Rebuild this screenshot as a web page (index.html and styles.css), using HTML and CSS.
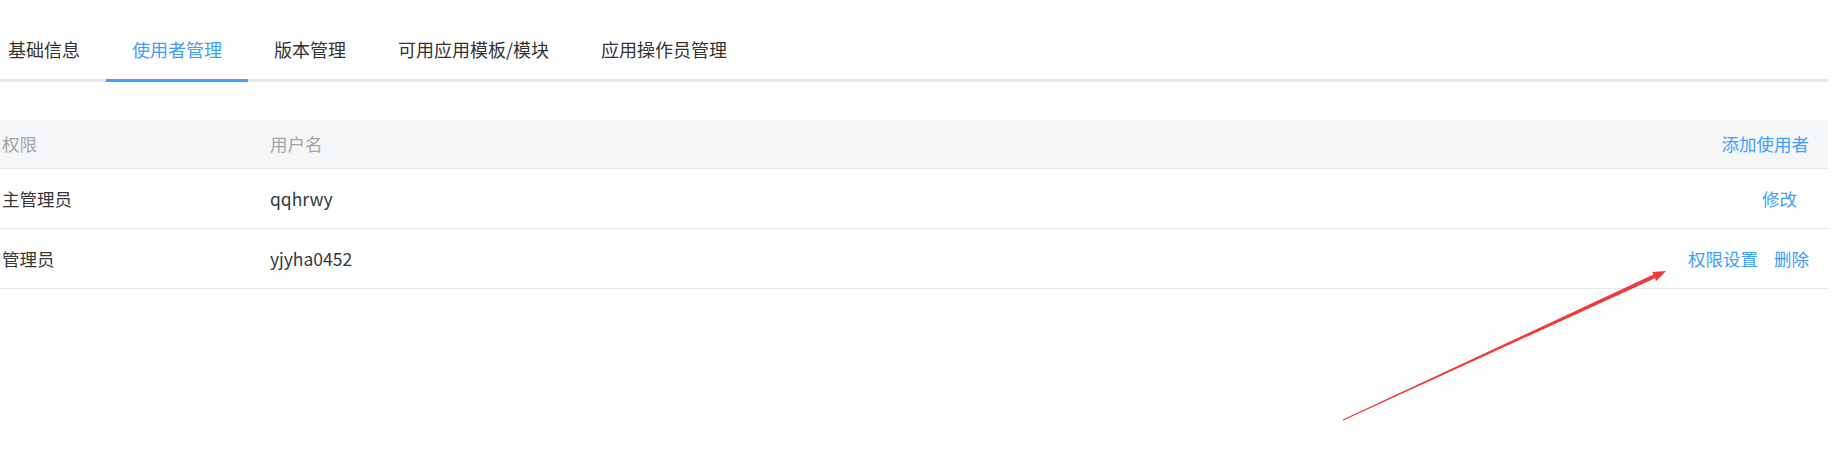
FILE: index.html
```html
<!DOCTYPE html>
<html>
<head>
	<meta charset="utf-8">
	<title>使用者管理</title>
	<link rel="stylesheet" href="styles.css">
</head>
<body>

	<div class="page">
		<div class="tabs">
			<div class="tab first">基础信息</div>
			<div class="tab active">使用者管理</div>
			<div class="tab">版本管理</div>
			<div class="tab">可用应用模板/模块</div>
			<div class="tab">应用操作员管理</div>
		</div>

		<div class="table">
			<div class="row head">
				<div class="cell">权限</div>
				<div class="cell">用户名</div>
				<div class="cell ops"><a class="link">添加使用者</a></div>
			</div>
			<div class="row">
				<div class="cell">主管理员</div>
				<div class="cell">qqhrwy</div>
				<div class="cell ops"><a class="link edit">修改</a></div>
			</div>
			<div class="row">
				<div class="cell">管理员</div>
				<div class="cell">yjyha0452</div>
				<div class="cell ops"><a class="link">权限设置</a><a class="link">删除</a></div>
			</div>
		</div>

		<!-- seta vermelha de anotacao -->
		<svg class="arrow" width="330" height="160" viewBox="0 0 330 160">
			<polygon fill="#f23a3a" points="2.8,153.6 313.4,8.6 312.1,5.9 326,5 316.3,15 315,12.2 3.2,154.4"/>
		</svg>
	</div>

</body>
</html>
```

FILE: styles.css
```css
body{
	margin: 0;
	font-family: "Noto Sans CJK SC", "Microsoft YaHei", sans-serif;
	font-size: 17.5px;
	color: #383838;
	background: #fff;
}

.page{
	position: relative;
	padding: 24px 7px 0 0;
	height: 448px;
}

.tabs{
	display: flex;
	border-bottom: 3px solid #e6e7ea;
	padding-left: 8px;
}

.tab{
	padding: 0 26px 5px;
	font-size: 18px;
	line-height: 50px;
	color: #333;
	margin-bottom: -3px;
	border-bottom: 3px solid transparent;
}

.tab.first{
	padding-left: 0;
}

.tab.active{
	color: #409eff;
	border-bottom-color: #409eff;
}

.table{
	margin-top: 38px;
}

.row{
	display: grid;
	grid-template-columns: 268px 1fr auto;
	align-items: center;
	height: 59px;
	border-bottom: 1px solid #e6e6e6;
}

.row.head{
	height: 48px;
	background: #f5f6f8;
	color: #a3a5a9;
}

.cell{
	padding-left: 2px;
	line-height: 24px;
}

.ops{
	padding-right: 19px;
	text-align: right;
}

.link{
	color: #409eff;
	cursor: pointer;
}

.link + .link{
	margin-left: 16px;
}

.edit{
	margin-right: 12px;
}

.arrow{
	position: absolute;
	left: 1340px;
	top: 266px;
	pointer-events: none;
}
```
